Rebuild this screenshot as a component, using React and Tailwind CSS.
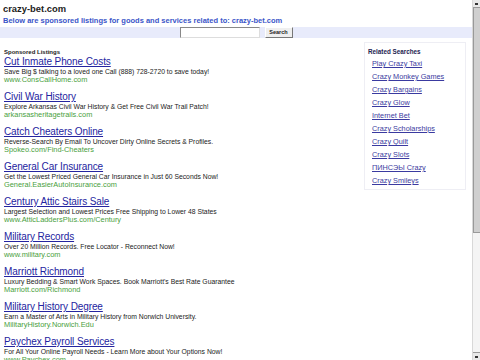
import React from "react";

const listings = [
  ["Cut Inmate Phone Costs", "Save Big $ talking to a loved one Call (888) 728-2720 to save today!", "www.ConsCallHome.com"],
  ["Civil War History", "Explore Arkansas Civil War History & Get Free Civil War Trail Patch!", "arkansasheritagetrails.com"],
  ["Catch Cheaters Online", "Reverse-Search By Email To Uncover Dirty Online Secrets & Profiles.", "Spokeo.com/Find-Cheaters"],
  ["General Car Insurance", "Get the Lowest Priced General Car Insurance in Just 60 Seconds Now!", "General.EasierAutoInsurance.com"],
  ["Century Attic Stairs Sale", "Largest Selection and Lowest Prices Free Shipping to Lower 48 States", "www.AtticLaddersPlus.com/Century"],
  ["Military Records", "Over 20 Million Records. Free Locator - Reconnect Now!", "www.military.com"],
  ["Marriott Richmond", "Luxury Bedding & Smart Work Spaces. Book Marriott's Best Rate Guarantee", "Marriott.com/Richmond"],
  ["Military History Degree", "Earn a Master of Arts in Military History from Norwich University.", "MilitaryHistory.Norwich.Edu"],
  ["Paychex Payroll Services", "For All Your Online Payroll Needs - Learn More about Your Options Now!", "www.Paychex.com"],
];

const related = [
  "Play Crazy Taxi",
  "Crazy Monkey Games",
  "Crazy Bargains",
  "Crazy Glow",
  "Internet Bet",
  "Crazy Scholarships",
  "Crazy Quilt",
  "Crazy Slots",
  "ПИНСЭЫ Crazy",
  "Crazy Smileys",
];

export default function App() {
  return (
    <div
      className="flex w-[480px] h-[360px] overflow-hidden bg-white"
      style={{ fontFamily: '"Liberation Sans", Arial, sans-serif' }}
    >
      <div className="w-[472px] flex flex-col">
        <div className="pl-[3px] pt-[3px] text-[9.4px] leading-[12px] font-bold text-[#222]">
          crazy-bet.com
        </div>
        <div className="pl-[3px] mt-[1px] text-[7.5px] leading-[9px] font-bold text-[#3a55c8] whitespace-nowrap">
          Below are sponsored listings for goods and services related to: crazy-bet.com
        </div>
        <div className="mt-[2px] h-[15px] bg-[#e8ebfb] flex items-center justify-center gap-[5px]">
          <div className="w-[80px] h-[11px] bg-white border border-t-[#888] border-l-[#888] border-r-[#ddd] border-b-[#ddd]" />
          <div className="w-[28px] h-[11px] bg-[#efefef] border border-t-[#fff] border-l-[#fff] border-r-[#777] border-b-[#777] flex items-center justify-center text-[5.5px] font-bold text-[#222]">
            Search
          </div>
        </div>
        <div className="mt-[1px] h-[1px] bg-[#e2e2e2]" />
        <div className="flex">
          <div className="flex-1 pl-[4px] pt-[9px]">
            <div className="text-[6px] leading-[8px] font-bold text-[#222]">Sponsored Listings</div>
            {listings.map(([t, d, u]) => (
              <div key={t} className="mb-[7px]">
                <div className="text-[10px] leading-[12px] tracking-[-0.1px] text-[#2424a0] underline whitespace-nowrap">{t}</div>
                <div className="text-[6.8px] leading-[8px] text-[#222] whitespace-nowrap">{d}</div>
                <div className="text-[7.4px] leading-[8px] text-[#48a03c] whitespace-nowrap">{u}</div>
              </div>
            ))}
          </div>
          <div className="w-[102px] mr-[6px] mt-[3px] self-start border border-[#eeeef4] pl-[3px] pt-[4px] pb-[2px]">
            <div className="text-[6.3px] leading-[9px] font-bold text-[#222250]">Related Searches</div>
            <div className="pl-[4px] pt-[1px]">
              {related.map((r) => (
                <div key={r} className="text-[7.3px] leading-[13px] text-[#3a3aa0] underline whitespace-nowrap">
                  {r}
                </div>
              ))}
            </div>
          </div>
        </div>
      </div>
      <div className="w-[8px] h-[360px] flex flex-col bg-[#f0f0f0] border-l border-[#d8d8d8]">
        <div className="h-[8px] bg-[#e8e8e8] border-b border-[#999] flex items-center justify-center">
          <div className="w-[3px] h-[2px] bg-[#333]" />
        </div>
        <div className="h-[225px] bg-[#cfcfcf] border-l border-[#999] border-b border-[#888]" />
        <div className="flex-1 bg-[#f4f4f4]" />
        <div className="h-[8px] bg-[#e8e8e8] border-t border-[#999] flex items-center justify-center">
          <div className="w-[3px] h-[2px] bg-[#333]" />
        </div>
      </div>
    </div>
  );
}
